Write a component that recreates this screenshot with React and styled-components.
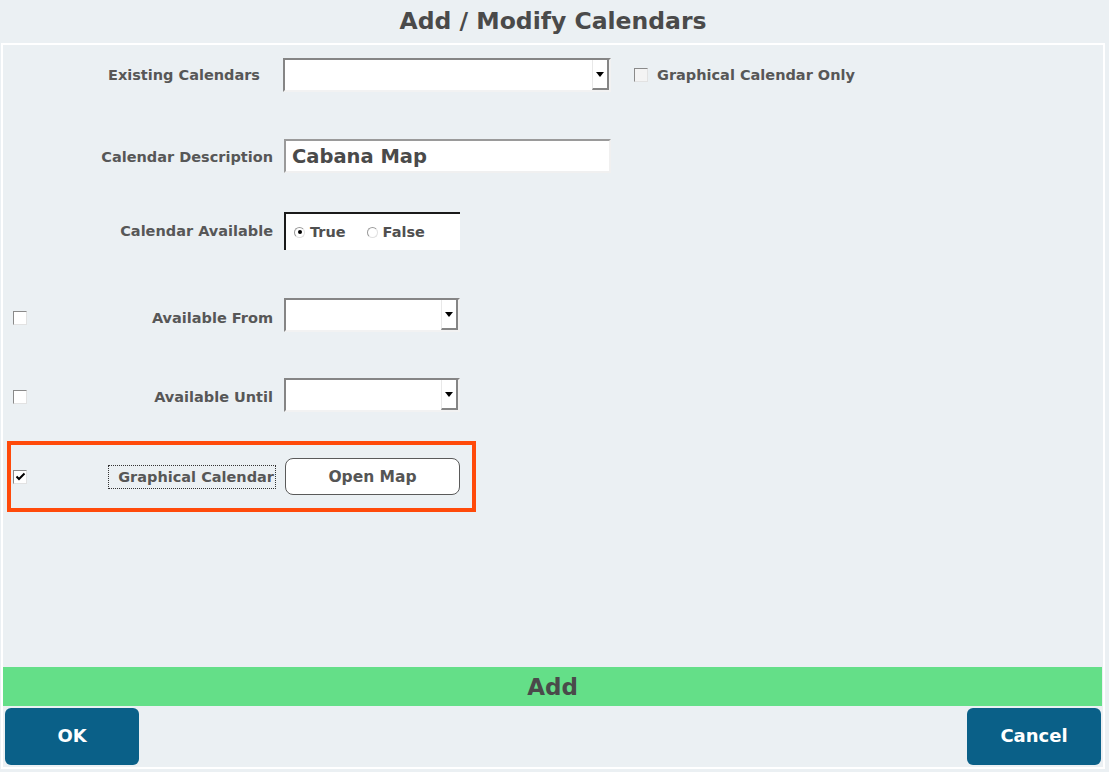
import React from 'react';
import styled, { createGlobalStyle } from 'styled-components';

const GlobalStyle = createGlobalStyle`
  html, body {
    margin: 0;
    padding: 0;
    background: #ebf0f3;
  }
  body {
    font-family: "DejaVu Sans", Verdana, sans-serif;
  }
`;

const Page = styled.div`
  width: 1109px;
  height: 772px;
  display: flex;
  flex-direction: column;
  background: #ebf0f3;
  box-sizing: border-box;
`;

const Title = styled.h1`
  margin: 0;
  height: 41px;
  padding-bottom: 2px;
  width: 1106px;
  display: flex;
  align-items: center;
  justify-content: center;
  font-size: 23.5px;
  font-weight: bold;
  color: #4a4a4a;
`;

const Panel = styled.div`
  flex: 1;
  margin: 0 4px 3px 1px;
  border: 2px solid #ffffff;
  display: flex;
  flex-direction: column;
  box-sizing: border-box;
`;

const Form = styled.div`
  flex: 1;
  display: flex;
  flex-direction: column;
`;

const Row = styled.div`
  display: grid;
  grid-template-columns: ${p => p.$labelWidth || 270}px auto auto;
  justify-content: start;
  column-gap: ${p => p.$gap || 11}px;
  align-items: center;
  height: ${p => p.$height || 34}px;
  margin-top: ${p => p.$top || 0}px;
`;

const LabelCell = styled.div`
  display: flex;
  align-items: center;
  justify-content: space-between;
  padding-left: ${p => p.$padLeft ?? 10}px;
  height: 100%;
`;

const Label = styled.span`
  font-size: 14.5px;
  font-weight: bold;
  color: #575757;
  white-space: nowrap;
  margin-left: auto;
  margin-top: ${p => p.$drop || 0}px;
  ${p => p.$focused && `
    outline: 1px dotted #333;
    padding: 3px 1px 3px 9px;
  `}
`;

const CheckBox = styled.span`
  width: 14px;
  height: 14px;
  box-sizing: border-box;
  background: ${p => (p.$muted ? '#f4f4f4' : '#fff')};
  border-top: 1px solid #8a8a8a;
  border-left: 1px solid #8a8a8a;
  border-bottom: 1px solid #e2e2e2;
  border-right: 1px solid #e2e2e2;
  display: inline-flex;
  align-items: center;
  justify-content: center;
  flex-shrink: 0;
  margin-top: ${p => p.$drop || 0}px;
`;

const Select = styled.div`
  width: ${p => p.$width}px;
  height: 34px;
  box-sizing: border-box;
  background: #fff;
  border-top: 2px solid #858585;
  border-left: 2px solid #858585;
  border-bottom: 2px solid #f2f2f2;
  border-right: 2px solid #f2f2f2;
  display: flex;
  justify-content: flex-end;
`;

const DropButton = styled.span`
  width: 17px;
  height: 100%;
  box-sizing: border-box;
  border-left: 1px solid #e8e8e8;
  border-right: 2px solid #858585;
  border-bottom: 2px solid #858585;
  background: #fff;
  display: flex;
  align-items: center;
  justify-content: center;

  &::after {
    content: '';
    border-left: 4px solid transparent;
    border-right: 4px solid transparent;
    border-top: 5px solid #000;
  }
`;

const TextInput = styled.div`
  width: 327px;
  height: 34px;
  box-sizing: border-box;
  background: #fff;
  border-top: 2px solid #9a9a9a;
  border-left: 2px solid #9a9a9a;
  border-bottom: 2px solid #f0f0f0;
  border-right: 2px solid #f0f0f0;
  padding-left: 6px;
  display: flex;
  align-items: center;
  font-size: 19.5px;
  font-weight: bold;
  color: #4a4a4a;
`;

const Inline = styled.div`
  display: flex;
  align-items: center;
  gap: 9px;
`;

const RadioBox = styled.div`
  width: 176px;
  height: 38px;
  box-sizing: border-box;
  background: #fff;
  border-top: 2px solid #1a1a1a;
  border-left: 2px solid #1a1a1a;
  display: flex;
  align-items: center;
  padding-left: 8px;
  gap: 21px;
`;

const RadioOption = styled.span`
  display: inline-flex;
  align-items: center;
  gap: 5px;
  font-size: 14.5px;
  font-weight: bold;
  color: #505050;
`;

const RadioDot = styled.span`
  width: 11px;
  height: 11px;
  border-radius: 50%;
  box-sizing: border-box;
  border: 1px solid #9a9a9a;
  border-right-color: #e0e0e0;
  border-bottom-color: #e0e0e0;
  background: #fff;
  display: inline-flex;
  align-items: center;
  justify-content: center;

  &::after {
    content: '';
    width: 4px;
    height: 4px;
    border-radius: 50%;
    background: ${p => (p.$checked ? '#000' : 'transparent')};
  }
`;

const Highlight = styled.div`
  margin: ${p => p.$top}px 0 0 4px;
  width: 469px;
  height: 71px;
  box-sizing: border-box;
  border: 4px solid #ff4a0a;
  display: flex;
  align-items: center;
`;

const MapButton = styled.button`
  width: 175px;
  height: 37px;
  border: 1px solid #5a5a5a;
  border-radius: 8px;
  background: #fff;
  font-family: "DejaVu Sans", Verdana, sans-serif;
  font-size: 15.5px;
  font-weight: bold;
  color: #555;
  padding: 0;
`;

const AddBar = styled.div`
  height: 39px;
  background: #64df88;
  display: flex;
  align-items: center;
  justify-content: center;
  font-size: 23px;
  font-weight: bold;
  color: #4a4a4a;
  margin-right: 1px;
`;

const ButtonRow = styled.div`
  display: flex;
  justify-content: space-between;
  padding: 2px;
`;

const ActionButton = styled.button`
  width: 134px;
  height: 57px;
  border: none;
  border-radius: 6px;
  background: #0a6088;
  color: #fff;
  font-family: "DejaVu Sans", Verdana, sans-serif;
  font-size: 18px;
  font-weight: bold;
  padding: 0 0 3px;
`;

const CheckMark = () => (
  <svg width="11" height="11" viewBox="0 0 11 11">
    <path d="M1.5 5.5 L4 8 L9.5 2.5" stroke="#000" strokeWidth="2" fill="none" />
  </svg>
);

export default function App() {
  return (
    <>
      <GlobalStyle />
      <Page>
        <Title>Add / Modify Calendars</Title>
        <Panel>
          <Form>
            <Row $top={13} $labelWidth={257} $gap={23}>
              <LabelCell>
                <Label>Existing Calendars</Label>
              </LabelCell>
              <Select $width={328}>
                <DropButton />
              </Select>
              <Inline>
                <CheckBox $muted />
                <Label>Graphical Calendar Only</Label>
              </Inline>
            </Row>

            <Row $top={47}>
              <LabelCell>
                <Label $drop={1}>Calendar Description</Label>
              </LabelCell>
              <TextInput>Cabana Map</TextInput>
            </Row>

            <Row $top={39} $height={38}>
              <LabelCell>
                <Label>Calendar Available</Label>
              </LabelCell>
              <RadioBox>
                <RadioOption>
                  <RadioDot $checked />
                  True
                </RadioOption>
                <RadioOption>
                  <RadioDot />
                  False
                </RadioOption>
              </RadioBox>
            </Row>

            <Row $top={48}>
              <LabelCell>
                <CheckBox $drop={6} />
                <Label $drop={6}>Available From</Label>
              </LabelCell>
              <Select $width={176}>
                <DropButton />
              </Select>
            </Row>

            <Row $top={46}>
              <LabelCell>
                <CheckBox $drop={4} />
                <Label $drop={4}>Available Until</Label>
              </LabelCell>
              <Select $width={176}>
                <DropButton />
              </Select>
            </Row>

            <Highlight $top={29}>
              <Row $labelWidth={264} $gap={10} $height={37}>
                <LabelCell $padLeft={2}>
                  <CheckBox>
                    <CheckMark />
                  </CheckBox>
                  <Label $focused>Graphical Calendar</Label>
                </LabelCell>
                <MapButton>Open Map</MapButton>
              </Row>
            </Highlight>
          </Form>

          <AddBar>Add</AddBar>
          <ButtonRow>
            <ActionButton>OK</ActionButton>
            <ActionButton>Cancel</ActionButton>
          </ButtonRow>
        </Panel>
      </Page>
    </>
  );
}
